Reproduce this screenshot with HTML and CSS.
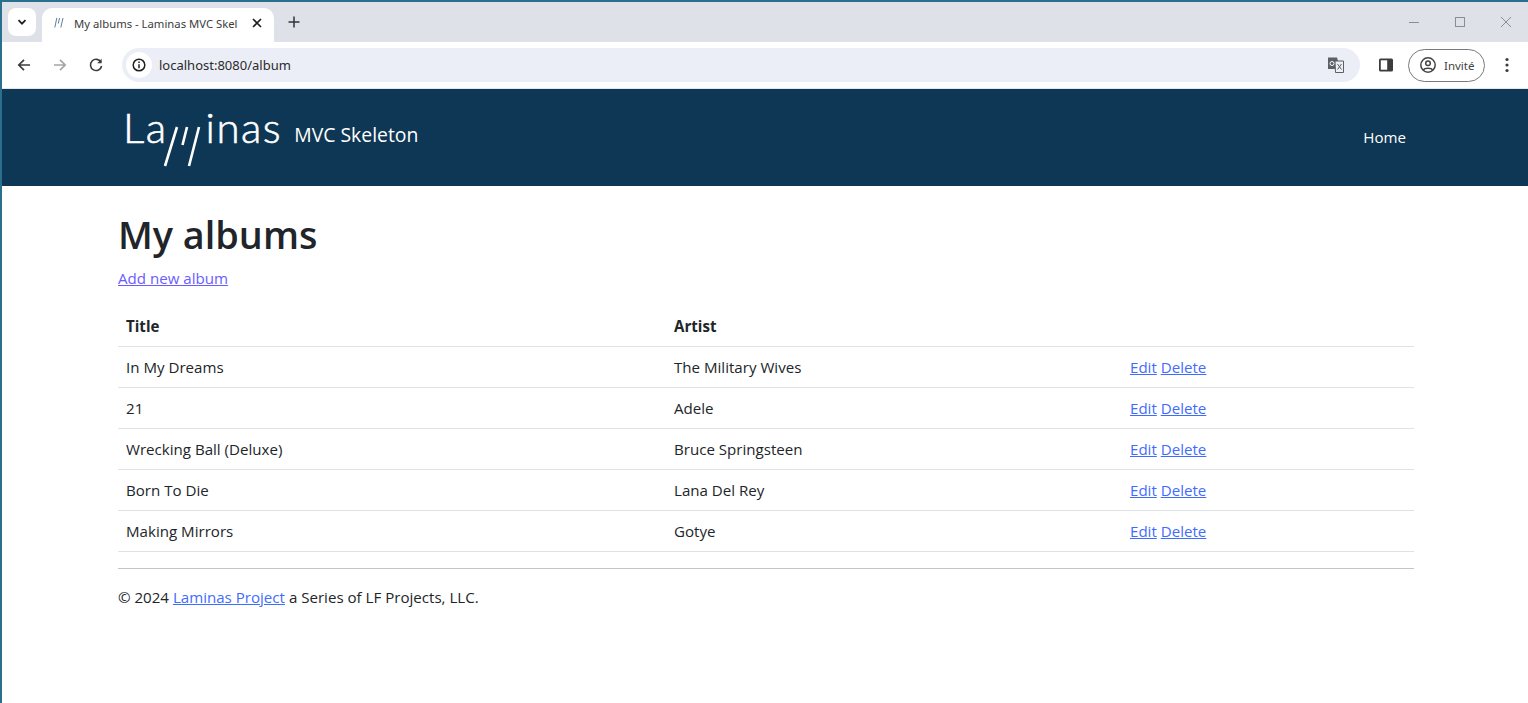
FILE: index.html
```html
<!DOCTYPE html>
<html lang="en">

<head>
    <meta charset="UTF-8">
    <meta name="viewport" content="width=device-width, initial-scale=1.0">
    <title>My albums - Laminas MVC Skeleton</title>
    <link rel="stylesheet" href="styles.css">
</head>

<body>
    <div class="window">
        <!-- browser tab strip -->
        <div class="tabstrip">
            <button class="tab-search" aria-label="Search tabs">
                <svg width="12" height="12" viewBox="0 0 12 12"><path d="M2.5 4.2 6 7.7l3.5-3.5" fill="none" stroke="#1f1f1f" stroke-width="1.8"/></svg>
            </button>
            <div class="tab">
                <svg class="tab-favicon" width="12" height="12" viewBox="0 0 12 12"><path d="M3.800 1 1.800 10.500M6.500 1 5.300 6.500M10 1 7.800 10.500" fill="none" stroke="#5f7f9a" stroke-width="1"/></svg>
                <span class="tab-title">My albums - Laminas MVC Skel</span>
                <svg class="tab-close" width="10" height="10" viewBox="0 0 10 10"><path d="M1 1l8 8M9 1l-8 8" stroke="#1f1f1f" stroke-width="1.6"/></svg>
            </div>
            <svg class="new-tab" width="12" height="12" viewBox="0 0 12 12"><path d="M6 .5v11M.5 6h11" stroke="#333" stroke-width="1.5"/></svg>
            <div class="window-controls">
                <svg width="12" height="12" viewBox="0 0 12 12"><path d="M1 6.5h10" stroke="#8a8d92" stroke-width="1"/></svg>
                <svg width="12" height="12" viewBox="0 0 12 12"><rect x="1.5" y="1.5" width="9" height="9" fill="none" stroke="#8a8d92"/></svg>
                <svg width="12" height="12" viewBox="0 0 12 12"><path d="M1 1l10 10M11 1 1 11" stroke="#8a8d92" stroke-width="1"/></svg>
            </div>
        </div>

        <!-- browser toolbar -->
        <div class="toolbar">
            <svg class="nav-icon" width="16" height="16" viewBox="0 0 16 16"><path d="M14 8H3M8 2.8 2.8 8 8 13.2" fill="none" stroke="#3c3c3c" stroke-width="1.7"/></svg>
            <svg class="nav-icon" width="16" height="16" viewBox="0 0 16 16"><path d="M2 8h11M8 2.8 13.2 8 8 13.2" fill="none" stroke="#a3a5a8" stroke-width="1.7"/></svg>
            <svg class="nav-icon" width="16" height="16" viewBox="0 0 16 16"><path d="M13 5.2A5.6 5.6 0 1 0 13.6 9" fill="none" stroke="#3c3c3c" stroke-width="1.6"/><path d="M13.6 1.8v4.4H9.2z" fill="#3c3c3c"/></svg>
            <div class="omnibox">
                <span class="site-info">
                    <svg width="14" height="14" viewBox="0 0 14 14"><circle cx="7" cy="7" r="5.8" fill="none" stroke="#1f1f1f" stroke-width="1.5"/><path d="M7 6.2v4M7 3.6v1.5" stroke="#1f1f1f" stroke-width="1.5"/></svg>
                </span>
                <span class="url">localhost:8080/album</span>
                <svg class="translate" width="18" height="18" viewBox="0 0 18 18"><path d="M1 1.500h9l1 3.500H8l1 8H1z" fill="#5c5f63"/><path d="M8 5h8.500v11.500H8.500z" fill="#eef0f4" stroke="#5c5f63"/><circle cx="5" cy="7.500" r="2" fill="none" stroke="#fff"/><path d="M10.500 8l4 5.500M14.500 8l-4 5.500" stroke="#5c5f63"/></svg>
            </div>
            <svg class="side-panel" width="16" height="16" viewBox="0 0 16 16"><rect x="1" y="1.500" width="14" height="13" rx="1.500" fill="#3c3c3c"/><rect x="2.800" y="3.300" width="6.400" height="9.400" fill="#fff"/></svg>
            <div class="profile">
                <svg width="18" height="18" viewBox="0 0 18 18"><circle cx="9" cy="9" r="7.200" fill="none" stroke="#444" stroke-width="1.500"/><circle cx="9" cy="7.200" r="2.300" fill="none" stroke="#444" stroke-width="1.500"/><path d="M4.500 14c1-2.200 8-2.200 9 0" fill="none" stroke="#444" stroke-width="1.500"/></svg>
                <span>Invité</span>
            </div>
            <svg class="menu-dots" width="4" height="16" viewBox="0 0 4 16"><circle cx="2" cy="2.500" r="1.600" fill="#3c3c3c"/><circle cx="2" cy="8" r="1.600" fill="#3c3c3c"/><circle cx="2" cy="13.500" r="1.600" fill="#3c3c3c"/></svg>
        </div>

        <!-- page -->
        <nav class="navbar">
            <a class="brand" href="#">
                <span class="logo-text">La</span>
                <svg class="logo-slashes" width="44" height="42" viewBox="0 0 44 42"><path d="M14 1 2 40M24 1 19.500 19M36 1 26 40" fill="none" stroke="#fff" stroke-width="2.600"/></svg>
                <span class="logo-text">inas</span>
                <span class="brand-name">MVC Skeleton</span>
            </a>
            <a class="nav-link" href="#">Home</a>
        </nav>

        <main class="container">
            <h1>My albums</h1>
            <p class="add-link"><a class="visited" href="#">Add new album</a></p>
            <table class="albums">
                <thead>
                    <tr>
                        <th class="col-title">Title</th>
                        <th class="col-artist">Artist</th>
                        <th>&nbsp;</th>
                    </tr>
                </thead>
                <tbody>
                    <tr>
                        <td>In My Dreams</td>
                        <td>The Military Wives</td>
                        <td><a href="#">Edit</a> <a href="#">Delete</a></td>
                    </tr>
                    <tr>
                        <td>21</td>
                        <td>Adele</td>
                        <td><a href="#">Edit</a> <a href="#">Delete</a></td>
                    </tr>
                    <tr>
                        <td>Wrecking Ball (Deluxe)</td>
                        <td>Bruce Springsteen</td>
                        <td><a href="#">Edit</a> <a href="#">Delete</a></td>
                    </tr>
                    <tr>
                        <td>Born To Die</td>
                        <td>Lana Del Rey</td>
                        <td><a href="#">Edit</a> <a href="#">Delete</a></td>
                    </tr>
                    <tr>
                        <td>Making Mirrors</td>
                        <td>Gotye</td>
                        <td><a href="#">Edit</a> <a href="#">Delete</a></td>
                    </tr>
                </tbody>
            </table>
            <hr>
            <footer>
                <p>&copy; 2024 <a href="#">Laminas Project</a> a Series of LF Projects, LLC.</p>
            </footer>
        </main>
    </div>
</body>

</html>
```

FILE: styles.css
```css
html,
body {
    margin: 0;
    padding: 0;
    height: 100%;
    overflow: hidden;
    background-color: #fff;
}

body {
    font-family: 'Open Sans', 'Noto Sans', sans-serif;
    font-size: 15.1px;
    color: #212529;
}

.window {
    height: 100%;
    box-sizing: border-box;
    border-left: 2px solid #2a6f8c;
    border-top: 2px solid #2a6f8c;
}

/* tab strip */
.tabstrip {
    height: 40px;
    background-color: #dee1e7;
    display: flex;
    align-items: flex-end;
    padding-left: 6px;
    position: relative;
}

.tab-search {
    width: 28px;
    height: 28px;
    margin-bottom: 6px;
    margin-right: 6px;
    padding: 0;
    border: none;
    border-radius: 8px;
    background-color: #fff;
    display: flex;
    align-items: center;
    justify-content: center;
}

.tab {
    width: 232px;
    height: 34px;
    box-sizing: border-box;
    padding: 0 12px 4px 11px;
    background-color: #fff;
    border-radius: 10px 10px 0 0;
    display: flex;
    align-items: center;
    font-family: 'Noto Sans', sans-serif;
    font-size: 11.300px;
    color: #3c3c3c;
}

.tab-favicon {
    margin-right: 9px;
    flex-shrink: 0;
}

.tab-title {
    flex: 1;
    white-space: nowrap;
}

.tab-close {
    margin-left: 8px;
    flex-shrink: 0;
}

.new-tab {
    margin-left: 14px;
    margin-bottom: 14px;
}

.window-controls {
    margin-left: auto;
    margin-bottom: 14px;
    padding-right: 16px;
    display: flex;
    gap: 34px;
}

/* toolbar */
.toolbar {
    height: 47px;
    box-sizing: border-box;
    background-color: #fff;
    border-bottom: 1px solid #e4e6ea;
    display: flex;
    align-items: center;
    padding: 0 0 0 14px;
}

.nav-icon {
    margin-right: 20px;
    flex-shrink: 0;
}

.omnibox {
    width: 1238px;
    height: 34px;
    margin-left: -2px;
    border-radius: 17px;
    background-color: #ebeef7;
    display: flex;
    align-items: center;
    flex-shrink: 0;
}

.site-info {
    width: 26px;
    height: 26px;
    margin-left: 4px;
    border-radius: 50%;
    background-color: #fff;
    display: flex;
    align-items: center;
    justify-content: center;
}

.url {
    margin-left: 7px;
    font-family: 'Noto Sans', sans-serif;
    font-size: 13px;
    color: #2b2b2b;
}

.translate {
    margin-left: auto;
    margin-right: 15px;
}

.side-panel {
    margin-left: 18px;
    flex-shrink: 0;
}

.profile {
    width: 77px;
    height: 33px;
    box-sizing: border-box;
    margin-left: 14px;
    padding-left: 10px;
    border: 1px solid #77797c;
    border-radius: 17px;
    display: flex;
    align-items: center;
    gap: 7px;
    font-family: 'Noto Sans', sans-serif;
    font-size: 11.500px;
    color: #444;
    flex-shrink: 0;
}

.menu-dots {
    margin-left: 20px;
    flex-shrink: 0;
}

/* page navbar */
.navbar {
    height: 97px;
    box-sizing: border-box;
    background-color: #0e3755;
    display: flex;
    align-items: flex-start;
    padding: 0 122px 0 121px;
}

.brand {
    display: flex;
    align-items: flex-start;
    color: #fff;
    text-decoration: none;
    margin-top: 13px;
}

.logo-text {
    font-family: 'Lato', sans-serif;
    font-weight: 300;
    font-size: 42px;
    line-height: 50px;
    letter-spacing: 1.500px;
    -webkit-text-stroke: 0.6px #fff;
}

.logo-slashes {
    margin: 24px -1px 0 -5px;
    flex-shrink: 0;
}

.brand-name {
    margin: 20px 0 0 12px;
    font-size: 19.400px;
    line-height: 26px;
}

.nav-link {
    margin-left: auto;
    margin-top: 37px;
    color: #fff;
    text-decoration: none;
    line-height: 22px;
}

/* content */
.container {
    padding: 0 114px 0 116px;
}

h1 {
    margin: 21px 0 0;
    font-size: 37.800px;
    line-height: 56px;
    font-weight: 600;
}

a {
    color: #3f6cff;
}

a.visited {
    color: #6a5cff;
}

.add-link {
    margin: 4px 0 16px;
    line-height: 23px;
}

.albums {
    width: 100%;
    border-collapse: collapse;
    table-layout: fixed;
}

.albums th,
.albums td {
    height: 40px;
    padding: 0 8px;
    border-bottom: 1px solid #dee2e6;
    text-align: left;
}

.albums th {
    font-weight: 700;
}

.col-title {
    width: 532px;
}

.col-artist {
    width: 440px;
}

hr {
    margin: 16px 0 0;
    border: none;
    border-top: 1px solid #c4c4c4;
}

footer p {
    margin: 17px 0 0;
    line-height: 23px;
}
```
